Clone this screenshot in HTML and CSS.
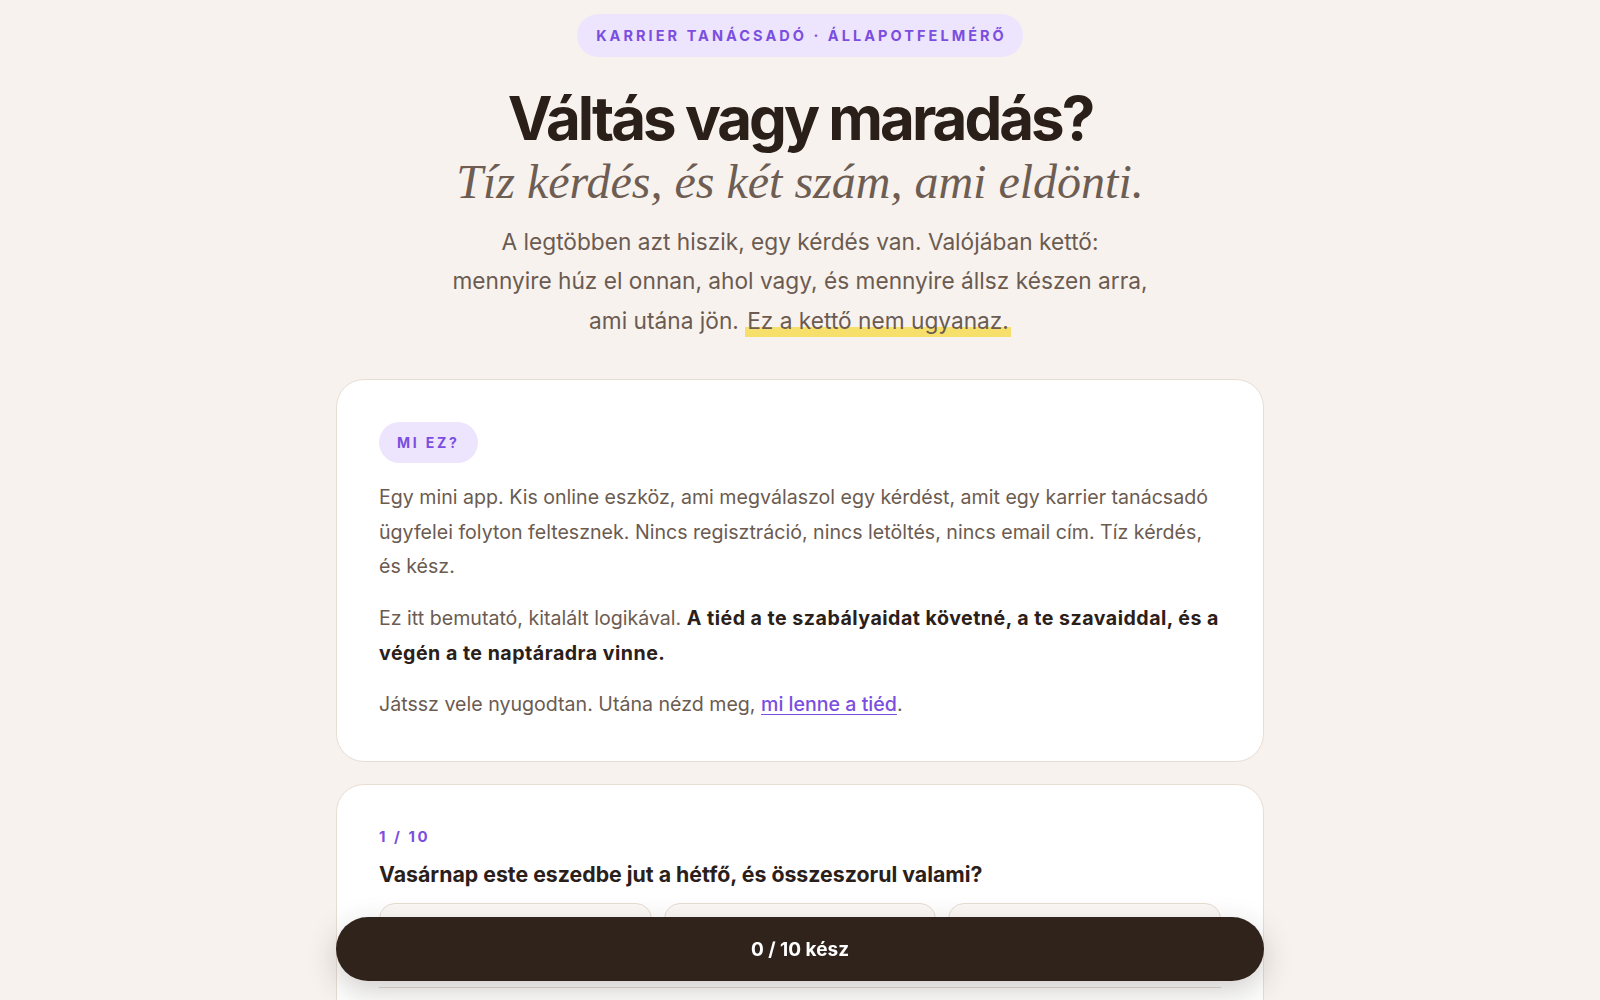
FILE: index.html
```html
<!DOCTYPE html>
<html lang="hu">
<head>
<meta charset="utf-8">
<title>Váltás vagy maradás?</title>
<link rel="stylesheet" href="styles.css">
</head>
<body>
<main class="page">
  <header class="hero">
    <div class="eyebrow">Karrier tanácsadó · Állapotfelmérő</div>
    <h1 class="title">Váltás vagy maradás?</h1>
    <p class="subtitle">Tíz kérdés, és két szám, ami eldönti.</p>
    <p class="lead">A legtöbben azt hiszik, egy kérdés van. Valójában kettő:<br>mennyire húz el onnan, ahol vagy, és mennyire állsz készen arra,<br>ami utána jön. <span class="mark">Ez a kettő nem ugyanaz.</span></p>
  </header>

  <section class="card intro">
    <div class="tag">Mi ez?</div>
    <p>Egy mini app. Kis online eszköz, ami megválaszol egy kérdést, amit egy karrier tanácsadó ügyfelei folyton feltesznek. Nincs regisztráció, nincs letöltés, nincs email cím. Tíz kérdés, és kész.</p>
    <p>Ez itt bemutató, kitalált logikával. <strong>A tiéd a te szabályaidat követné, a te szavaiddal, és a végén a te naptáradra vinne.</strong></p>
    <p>Játssz vele nyugodtan. Utána nézd meg, <a href="#" class="link">mi lenne a tiéd</a>.</p>
  </section>

  <section class="card quiz">
    <div class="question">
      <div class="counter">1 / 10</div>
      <h2 class="q-text">Vasárnap este eszedbe jut a hétfő, és összeszorul valami?</h2>
      <div class="options">
        <button class="option">Igen, szinte mindig</button>
        <button class="option">Néha</button>
        <button class="option">Nem igazán</button>
      </div>
    </div>
    <div class="question">
      <div class="counter">2 / 10</div>
      <h2 class="q-text">Ha ma felmondanál, tudnád, mit csinálnál holnap?</h2>
      <div class="options">
        <button class="option">Pontosan tudnám</button>
        <button class="option">Van egy sejtésem</button>
        <button class="option">Fogalmam sincs</button>
      </div>
    </div>
  </section>

  <div class="progress-bar">0 / 10 kész</div>
</main>
</body>
</html>
```

FILE: styles.css
```css
* { box-sizing: border-box; }

html, body {
  margin: 0;
  padding: 0;
}

body {
  background: #f7f2ee;
  font-family: "Inter", "Noto Sans", "Liberation Sans", sans-serif;
  color: #6b5b50;
  -webkit-font-smoothing: antialiased;
}

.page {
  max-width: 928px;
  margin: 0 auto;
  padding: 14px 0 120px;
}

.hero {
  display: flex;
  flex-direction: column;
  align-items: center;
  text-align: center;
}

.eyebrow {
  background: #ede4fd;
  color: #7b4ee0;
  font-size: 14.5px;
  font-weight: 700;
  letter-spacing: 0.21em;
  text-transform: uppercase;
  line-height: 17px;
  padding: 13px 16px 13px 19px;
  border-radius: 999px;
}

.title {
  margin: 27px 0 0;
  font-size: 60px;
  line-height: 68px;
  font-weight: 700;
  letter-spacing: -0.05em;
  color: #2b2019;
}

.subtitle {
  margin: 2px 0 0;
  font-family: "Liberation Serif", "DejaVu Serif", serif;
  font-style: italic;
  font-size: 48px;
  line-height: 55px;
  color: #6e5d52;
}

.lead {
  margin: 13px 0 0;
  font-size: 22.7px;
  line-height: 39.3px;
  color: #6b5b50;
}

.mark {
  padding: 0 2px 3px;
  background: linear-gradient(transparent 66%, #f6e06b 66%, #f6e06b 100%);
}

.card {
  background: #ffffff;
  border: 1px solid #e7ddd3;
  border-radius: 28px;
}

.intro {
  margin-top: 39px;
  padding: 42px 42px 39px;
}

.tag {
  display: inline-block;
  background: #ede4fd;
  color: #7b4ee0;
  font-size: 14px;
  font-weight: 700;
  letter-spacing: 0.2em;
  text-transform: uppercase;
  line-height: 17px;
  padding: 12px 18px 12px 18px;
  border-radius: 999px;
}

.intro p {
  margin: 17px 0 0;
  font-size: 19.6px;
  line-height: 34.7px;
  color: #6b5b50;
}

.intro strong {
  color: #2b2019;
  font-weight: 700;
  letter-spacing: 0.025em;
}

.link {
  color: #7b4ee0;
  text-decoration: underline;
  text-underline-offset: 3px;
  font-weight: 500;
}

.quiz {
  margin-top: 22px;
  padding: 42px 42px 40px;
}

.question + .question {
  border-top: 1px solid #e3d9cf;
  margin-top: 14px;
  padding-top: 28px;
}

.counter {
  color: #7b4ee0;
  font-size: 15px;
  font-weight: 700;
  letter-spacing: 0.17em;
  line-height: 20px;
}

.q-text {
  margin: 12px 0 0;
  font-size: 21.3px;
  line-height: 30px;
  font-weight: 700;
  color: #2b2019;
}

.options {
  display: grid;
  grid-template-columns: repeat(3, 1fr);
  gap: 12px;
  margin-top: 14px;
}

.option {
  font-family: inherit;
  font-size: 17px;
  line-height: 24px;
  font-weight: 500;
  color: #2b2019;
  background: #fbf8f5;
  border: 1px solid #e6dcd1;
  border-radius: 16px;
  padding: 22px 16px;
  text-align: left;
}

.progress-bar {
  position: fixed;
  left: 50%;
  bottom: 19px;
  transform: translateX(-50%);
  width: 928px;
  height: 64px;
  border-radius: 999px;
  background: #2f231c;
  color: #ffffff;
  font-size: 19px;
  font-weight: 700;
  display: flex;
  align-items: center;
  justify-content: center;
  box-shadow: 0 10px 30px rgba(47, 35, 28, 0.22);
}
```
